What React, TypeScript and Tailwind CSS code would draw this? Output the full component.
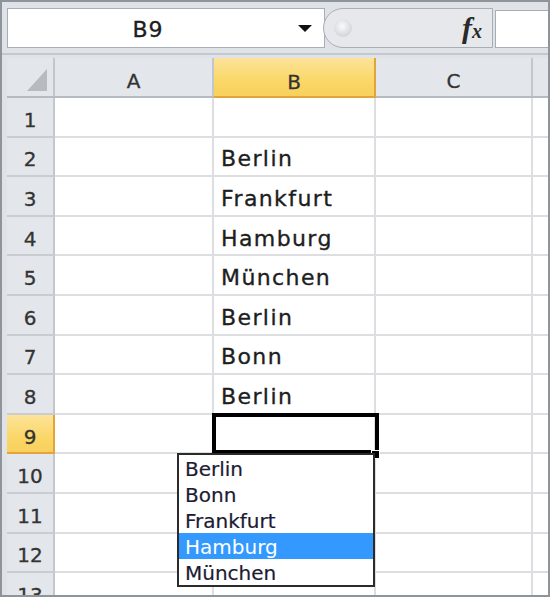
import React from "react";

const cellFont = { fontFamily: '"DejaVu Sans", "Liberation Sans", sans-serif' };

const rows: { n: number; b: string }[] = [
  { n: 1, b: "" },
  { n: 2, b: "Berlin" },
  { n: 3, b: "Frankfurt" },
  { n: 4, b: "Hamburg" },
  { n: 5, b: "München" },
  { n: 6, b: "Berlin" },
  { n: 7, b: "Bonn" },
  { n: 8, b: "Berlin" },
  { n: 9, b: "" },
  { n: 10, b: "" },
  { n: 11, b: "" },
  { n: 12, b: "" },
  { n: 13, b: "" },
];

const options = ["Berlin", "Bonn", "Frankfurt", "Hamburg", "München"];

function FormulaBar() {
  return (
    <div className="ml-[5px] mt-[6px] flex h-[40px]">
      <div className="flex w-[318px] items-center border border-[#a7aeb6] bg-white">
        <span className="flex-1 pl-[10px] pt-[2px] text-center text-[22px] tracking-[1px] text-[#1e1e1e] [-webkit-text-stroke:0.35px_#1e1e1e]">
          B9
        </span>
        <svg width="14" height="7" viewBox="0 0 14 7" className="mr-[12px] ml-[20px]">
          <path d="M0 0 L14 0 L7 7 Z" fill="#111" />
        </svg>
      </div>
      <div className="-ml-[2px] flex w-[170px] items-center rounded-l-[22px] border border-[#a7aeb6] bg-[#e6e8eb]">
        <div className="ml-[10px] h-[18px] w-[18px] rounded-full bg-[radial-gradient(circle_at_45%_40%,#fafafa,#d3d6da_70%,#c2c6cb)]" />
        <span className="ml-auto mr-[10px] pb-[2px] font-['Liberation_Serif'] text-[#2a2a2a] italic">
          <span className="text-[30px] font-bold">f</span>
          <span className="text-[20px] font-bold">x</span>
        </span>
      </div>
      <div className="ml-[2px] mt-[2px] flex-1 border-y border-l border-[#a7aeb6] bg-white" />
    </div>
  );
}

function HeaderRow() {
  return (
    <div className="flex h-[40px] border-b-2 border-[#b6bbc1]">
      <div className="relative w-[48px] border-r-2 border-[#c2c7cd] bg-[#e3e6ea]">
        <svg width="20" height="22" viewBox="0 0 20 22" className="absolute left-[20px] top-[11px]">
          <path d="M20 0 L20 22 L0 22 Z" fill="#b7bbc0" />
        </svg>
      </div>
      <div className="flex w-[159px] items-center justify-center border-r-2 border-[#c2c7cd] bg-[#e3e6ea] pt-[7px] text-[20px] text-[#333] [-webkit-text-stroke:0.3px_#333]">
        A
      </div>
      <div className="-mb-[2px] flex w-[162px] items-center justify-center border-b-2 border-r-2 border-[#e2a43b] bg-[linear-gradient(#fde39a,#fad768_60%,#f8d05c)] pt-[9px] text-[20px] text-[#333] [-webkit-text-stroke:0.3px_#333]">
        B
      </div>
      <div className="flex w-[157px] items-center justify-center border-r-2 border-[#c2c7cd] bg-[#e3e6ea] pt-[7px] text-[20px] text-[#333] [-webkit-text-stroke:0.3px_#333]">
        C
      </div>
      <div className="flex-1 bg-[#e3e6ea]" />
    </div>
  );
}

function Row({ n, b }: { n: number; b: string }) {
  const sel = n === 9;
  return (
    <div className="flex h-[39.6px]">
      <div
        className={
          sel
            ? "flex w-[48px] items-center justify-center border-b-2 border-r-2 border-[#e2a43b] bg-[linear-gradient(#fde39a,#fad768_60%,#f8d05c)] pt-[6px] text-[20px] text-[#333] [-webkit-text-stroke:0.3px_#333]"
            : "flex w-[48px] items-center justify-center border-b-2 border-r-2 border-b-[#c9cdd2] border-r-[#c2c7cd] bg-[#e3e6ea] pt-[6px] text-[20px] text-[#333] [-webkit-text-stroke:0.3px_#333]"
        }
      >
        {n}
      </div>
      <div className="w-[159px] border-b-2 border-r-2 border-[#dcdee1] bg-white" />
      <div className="flex w-[162px] items-center border-b-2 border-r-2 border-[#dcdee1] bg-white pl-[7px] pt-[5px] text-[22px] tracking-[1.4px] text-[#1e1e1e] [-webkit-text-stroke:0.35px_#1e1e1e]">
        {b}
      </div>
      <div className="w-[157px] border-b-2 border-r-2 border-[#dcdee1] bg-white" />
      <div className="flex-1 border-b-2 border-[#dcdee1] bg-white" />
    </div>
  );
}

function Dropdown() {
  return (
    <div className="absolute left-[170px] top-[395px] w-[198px] border-2 border-[#2b2b2b] bg-white">
      {options.map((o) => (
        <div
          key={o}
          className={
            o === "Hamburg"
              ? "flex h-[26px] items-center bg-[#3399ff] pl-[6px] pt-[2px] text-[20px] text-white"
              : "flex h-[26px] items-center pl-[6px] pt-[2px] text-[20px] text-[#1b1b33] [-webkit-text-stroke:0.2px_#1b1b33]"
          }
        >
          {o}
        </div>
      ))}
    </div>
  );
}

export default function App() {
  return (
    <div
      className="h-[597px] w-[550px] overflow-hidden border-2 border-[#8f949a] bg-[#dfe3e8]"
      style={cellFont}
    >
      <FormulaBar />
      <div className="mt-[5px] h-[2px] bg-[#c3c8ce]" />
      <div className="relative ml-[5px] mt-[3px]">
        <HeaderRow />
        {rows.map((r) => (
          <Row key={r.n} n={r.n} b={r.b} />
        ))}
        <div className="absolute left-[205px] top-[355px] h-[41px] w-[167px] border-4 border-black" />
        <div className="absolute left-[364px] top-[392px] h-[9px] w-[9px] border border-white bg-black" />
        <Dropdown />
      </div>
    </div>
  );
}
